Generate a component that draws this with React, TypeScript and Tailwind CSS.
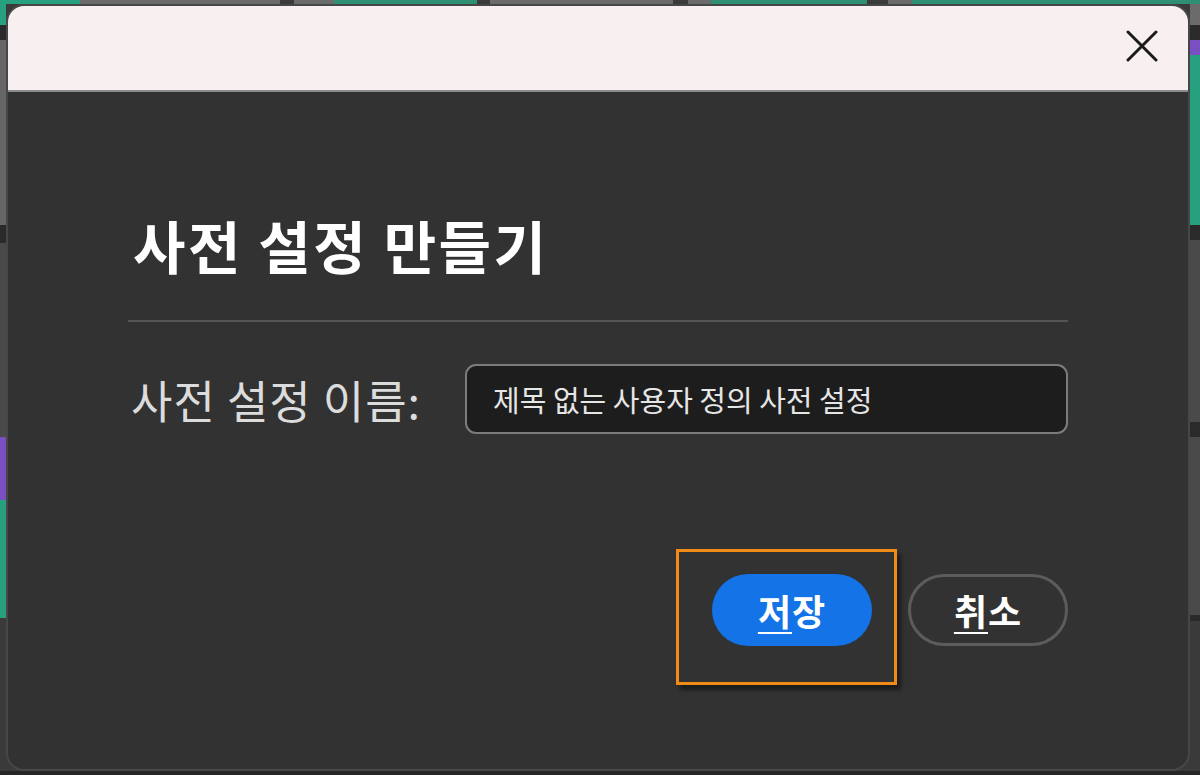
const kr = { fontFamily: '"Noto Sans CJK KR", "Noto Sans", sans-serif' };

type Band = { size: string; color: string };

// 대화 상자 뒤로 보이는 앱 화면의 색 띠
const topBands: Band[] = [
  { size: 'w-[80px]', color: 'bg-[#26a07e]' },
  { size: 'w-[200px]', color: 'bg-[#6b6b6b]' },
  { size: 'w-[14px]', color: 'bg-[#3a3a3a]' },
  { size: 'w-[40px]', color: 'bg-[#6b6b6b]' },
  { size: 'w-[143px]', color: 'bg-[#2f8f72]' },
  { size: 'w-[13px]', color: 'bg-[#3a3a3a]' },
  { size: 'w-[183px]', color: 'bg-[#6b6b6b]' },
  { size: 'w-[15px]', color: 'bg-[#3a3a3a]' },
  { size: 'w-[23px]', color: 'bg-[#6b6b6b]' },
  { size: 'w-[156px]', color: 'bg-[#2f8f72]' },
  { size: 'w-[21px]', color: 'bg-[#3a3a3a]' },
  { size: 'w-[24px]', color: 'bg-[#6b6b6b]' },
  { size: 'flex-1', color: 'bg-[#2f8f72]' },
];

const leftBands: Band[] = [
  { size: 'h-[21px]', color: 'bg-[#26a07e]' },
  { size: 'h-[15px]', color: 'bg-[#2a2a2a]' },
  { size: 'h-[185px]', color: 'bg-[#666666]' },
  { size: 'h-[18px]', color: 'bg-[#2a2a2a]' },
  { size: 'h-[194px]', color: 'bg-[#4a4a4a]' },
  { size: 'h-[63px]', color: 'bg-[#7a4fc4]' },
  { size: 'h-[118px]', color: 'bg-[#26a07e]' },
  { size: 'flex-1', color: 'bg-[#3d3d3d]' },
];

const rightBands: Band[] = [
  { size: 'h-[21px]', color: 'bg-[#6b6b6b]' },
  { size: 'h-[15px]', color: 'bg-[#2a2a2a]' },
  { size: 'h-[15px]', color: 'bg-[#7a4fc4]' },
  { size: 'h-[170px]', color: 'bg-[#26a07e]' },
  { size: 'h-[15px]', color: 'bg-[#2a2a2a]' },
  { size: 'h-[182px]', color: 'bg-[#4a4a4a]' },
  { size: 'h-[15px]', color: 'bg-[#2a2a2a]' },
  { size: 'h-[178px]', color: 'bg-[#4a4a4a]' },
  { size: 'h-[6px]', color: 'bg-[#2a2a2a]' },
  { size: 'flex-1', color: 'bg-[#3d3d3d]' },
];

function Bands({ bands, dir }: { bands: Band[]; dir: 'row' | 'col' }) {
  return (
    <div className={dir === 'row' ? 'flex h-[4px] shrink-0' : 'flex shrink-0 flex-col'}>
      {bands.map((b, i) => (
        <div key={i} className={`${b.size} ${b.color} shrink-0`} />
      ))}
    </div>
  );
}

function CloseIcon() {
  return (
    <svg width="32" height="32" viewBox="0 0 32 32" fill="none" stroke="#1b1b1b" strokeWidth="3" strokeLinecap="round">
      <path d="M2 2 L30 30 M30 2 L2 30" />
    </svg>
  );
}

export default function App() {
  return (
    <div className="flex h-[775px] w-[1200px] flex-col overflow-hidden bg-[#3a3a3a]" style={kr}>
      <Bands bands={topBands} dir="row" />
      <div className="flex flex-1">
        <div className="w-[6px]">
          <Bands bands={leftBands} dir="col" />
        </div>

        {/* 대화 상자 */}
        <div className="flex h-[767px] flex-1 flex-col overflow-hidden rounded-[18px] border-2 border-[#474747] bg-[#323232]">
          <div className="flex h-[86px] shrink-0 items-start justify-end border-b-2 border-[#8c8c8c] bg-[#f8f0f0] pr-[30px] pt-[24px]">
            <button type="button" aria-label="닫기">
              <CloseIcon />
            </button>
          </div>

          <div className="flex flex-1 flex-col px-[120px]">
            <h1 className="mt-[124px] pl-[5px] text-[57px] font-bold leading-none tracking-[2.5px] text-white">
              사전 설정 만들기
            </h1>
            <div className="mt-[47px] h-[2px] bg-[#555555]" />

            <div className="mt-[42px] flex items-center gap-[44px]">
              <label className="pl-[3px] text-[45px] font-normal leading-none tracking-[1px] text-[#dcdcdc]">
                사전 설정 이름:
              </label>
              <div className="flex h-[70px] flex-1 items-center rounded-[11px] border-2 border-[#7c7c7c] bg-[#1d1d1d] px-[26px]">
                <span className="text-[29px] leading-none text-[#e6e6e6]">제목 없는 사용자 정의 사전 설정</span>
              </div>
            </div>

            <div className="mt-[115px] flex items-start justify-end gap-[11px]">
              <div className="border-[3px] border-[#f28a17] pb-[36px] pl-[33px] pr-[22px] pt-[22px] shadow-[4px_5px_4px_rgba(0,0,0,0.45)]">
                <button
                  type="button"
                  className="flex h-[72px] w-[160px] items-center justify-center rounded-full bg-[#1473e6] text-[36px] font-bold tracking-[1px] text-white"
                >
                  <span>
                    <span className="underline decoration-2 underline-offset-[6px]">저</span>장
                  </span>
                </button>
              </div>
              <button
                type="button"
                className="mt-[25px] flex h-[72px] w-[160px] items-center justify-center rounded-full border-[3px] border-[#5c5c5c] text-[36px] font-bold tracking-[1px] text-white"
              >
                <span>
                  <span className="underline decoration-2 underline-offset-[6px]">취</span>소
                </span>
              </button>
            </div>
          </div>
        </div>

        <div className="w-[10px]">
          <Bands bands={rightBands} dir="col" />
        </div>
      </div>
      <div className="h-[4px] shrink-0 bg-[#262626]" />
    </div>
  );
}
